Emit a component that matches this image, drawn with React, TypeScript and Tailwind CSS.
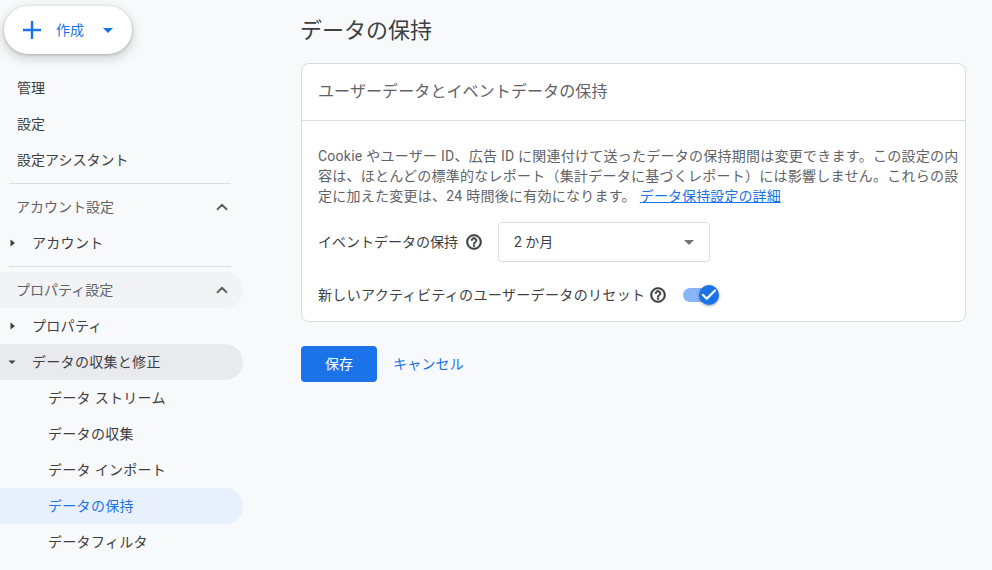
import React from "react";
import { ChevronUp, Check } from "lucide-react";

const font = "font-['Roboto','Noto_Sans_CJK_JP',sans-serif]";

const Caret = ({ open }: { open?: boolean }) => (
  <svg width="24" height="24" viewBox="0 0 24 24" className="shrink-0">
    {open ? <path d="M8.5 10.5h7L12 14z" fill="#3c4043" /> : <path d="M10.5 8.5v7l4.5-3.5z" fill="#3c4043" />}
  </svg>
);

const HelpIcon = () => (
  <svg width="18" height="18" viewBox="0 0 24 24" className="shrink-0" fill="#3c4043" stroke="#3c4043" strokeWidth="0.8">
    <path d="M11 18h2v-2h-2v2zm1-16C6.48 2 2 6.48 2 12s4.48 10 10 10 10-4.48 10-10S17.52 2 12 2zm0 18c-4.41 0-8-3.59-8-8s3.59-8 8-8 8 3.59 8 8-3.59 8-8 8zm0-14c-2.21 0-4 1.79-4 4h2c0-1.1.9-2 2-2s2 .9 2 2c0 2-3 1.75-3 5h2c0-2.25 3-2.5 3-5 0-2.21-1.79-4-4-4z" />
  </svg>
);

const SubItem = ({ label, active }: { label: string; active?: boolean }) => (
  <div
    className={`h-9 flex items-center pl-12 rounded-r-[18px] text-sm tracking-[0.3px] ${
      active ? "bg-[#e8f0fe] text-[#1a73e8]" : "text-[#3c4043]"
    }`}
  >
    {label}
  </div>
);

const Sidebar = () => {
  return (
    <aside className="w-[243px] shrink-0 mr-[58px]">
      <div className="pt-1.5 pl-1">
        <button className="w-32 h-12 flex items-center bg-white rounded-3xl shadow-[0_1px_3px_rgba(60,64,67,0.3),0_4px_8px_3px_rgba(60,64,67,0.15)]">
          <svg width="24" height="24" viewBox="0 0 24 24" className="ml-4 shrink-0">
            <path d="M13.2 13.2V21h-2.4v-7.8H3v-2.4h7.8V3h2.4v7.8H21v2.4z" fill="#1a73e8" />
          </svg>
          <span className="ml-3 text-sm text-[#1a73e8]">作成</span>
          <svg width="24" height="24" viewBox="0 0 24 24" className="ml-3 shrink-0">
            <path d="M7 10l5 5 5-5z" fill="#1a73e8" />
          </svg>
        </button>
      </div>
      {/* 管理メニュー */}
      <div className="mt-4 text-sm text-[#3c4043]">
        <div className="h-9 flex items-center pl-[17px]">管理</div>
        <div className="h-9 flex items-center pl-[17px]">設定</div>
        <div className="h-9 flex items-center pl-[17px]">設定アシスタント</div>
      </div>
      <hr className="mt-[5px] ml-[9px] w-[222px] border-[#dadce0]" />
      {/* アカウント設定 */}
      <div className="mt-[5px] h-9 flex items-center justify-between pl-[16px] pr-3 text-sm text-[#5f6368]">
        <span>アカウント設定</span>
        <ChevronUp size={18} strokeWidth={2.5} className="text-[#5f6368]" />
      </div>
      <div className="h-9 flex items-center text-sm tracking-[0.3px] text-[#3c4043]">
        <Caret />
        <span className="ml-2">アカウント</span>
      </div>
      <hr className="mt-[5px] ml-[9px] w-[222px] border-[#dadce0]" />
      {/* プロパティ設定 */}
      <div className="mt-[5px] h-9 flex items-center justify-between pl-[16px] pr-3 text-sm text-[#5f6368] bg-[#f1f3f4] rounded-r-[18px]">
        <span>プロパティ設定</span>
        <ChevronUp size={18} strokeWidth={2.5} className="text-[#5f6368]" />
      </div>
      <div className="h-9 flex items-center text-sm tracking-[0.3px] text-[#3c4043]">
        <Caret />
        <span className="ml-2">プロパティ</span>
      </div>
      <div className="h-9 flex items-center text-sm tracking-[0.3px] text-[#3c4043] bg-[#e8eaed] rounded-r-[18px]">
        <Caret open />
        <span className="ml-2">データの収集と修正</span>
      </div>
      <SubItem label="データ ストリーム" />
      <SubItem label="データの収集" />
      <SubItem label="データ インポート" />
      <SubItem label="データの保持" active />
      <SubItem label="データフィルタ" />
    </aside>
  );
};

const App = () => {
  return (
    <div className={`w-[992px] h-[570px] overflow-hidden flex bg-[#f8f9fa] ${font}`}>
      <Sidebar />
      <main className="w-[665px]">
        <h1 className="mt-[17px] -ml-px text-[22px] leading-7 text-[#3c4043]">データの保持</h1>
        <section className="mt-[18px] h-[259px] bg-white border border-[#dadce0] rounded-lg">
          <div className="h-[57px] flex items-center px-4 border-b border-[#dadce0] text-base tracking-[0.1px] text-[#5f6368]">
            ユーザーデータとイベントデータの保持
          </div>
          <div className="pl-4 pr-[5px] pt-[25px]">
            <p className="text-sm leading-5 tracking-[0.25px] text-[#5f6368]">
              Cookie やユーザー ID、広告 ID に関連付けて送ったデータの保持期間は変更できます。この設定の内容は、ほとんどの標準的なレポート（集計データに基づくレポート）には影響しません。これらの設定に加えた変更は、24 時間後に有効になります。
              <a className="ml-1 tracking-[0.1px] text-[#1a73e8] underline">データ保持設定の詳細</a>
            </p>
            <div className="mt-4 flex items-center text-sm text-[#3c4043]">
              <span>イベントデータの保持</span>
              <span className="ml-[7px]"><HelpIcon /></span>
              <div className="ml-[15px] w-[212px] h-10 flex items-center justify-between pl-[15px] pr-[15px] bg-white border border-[#dadce0] rounded">
                <span>2 か月</span>
                <svg width="10" height="5" viewBox="0 0 10 5"><path d="M0 0h10L5 5z" fill="#757575" /></svg>
              </div>
            </div>
            <div className="mt-[23px] h-5 flex items-center text-sm tracking-[0.35px] text-[#3c4043]">
              <span>新しいアクティビティのユーザーデータのリセット</span>
              <span className="ml-1"><HelpIcon /></span>
              <div className="relative ml-4 w-9 h-5 flex items-center">
                <div className="w-[34px] h-[14px] rounded-full bg-[#8ab4f8]" />
                <div className="absolute left-[16px] top-0 w-5 h-5 rounded-full bg-[#1a73e8] flex items-center justify-center shadow-[0_1px_3px_rgba(60,64,67,0.5)]">
                  <Check size={18} strokeWidth={3} className="text-white" />
                </div>
              </div>
            </div>
          </div>
        </section>
        <div className="mt-6 flex items-center">
          <button className="w-[76px] h-9 rounded bg-[#1a73e8] text-sm text-white">保存</button>
          <a className="ml-4 text-sm tracking-[0.2px] text-[#1a73e8]">キャンセル</a>
        </div>
      </main>
    </div>
  );
};

export default App;
